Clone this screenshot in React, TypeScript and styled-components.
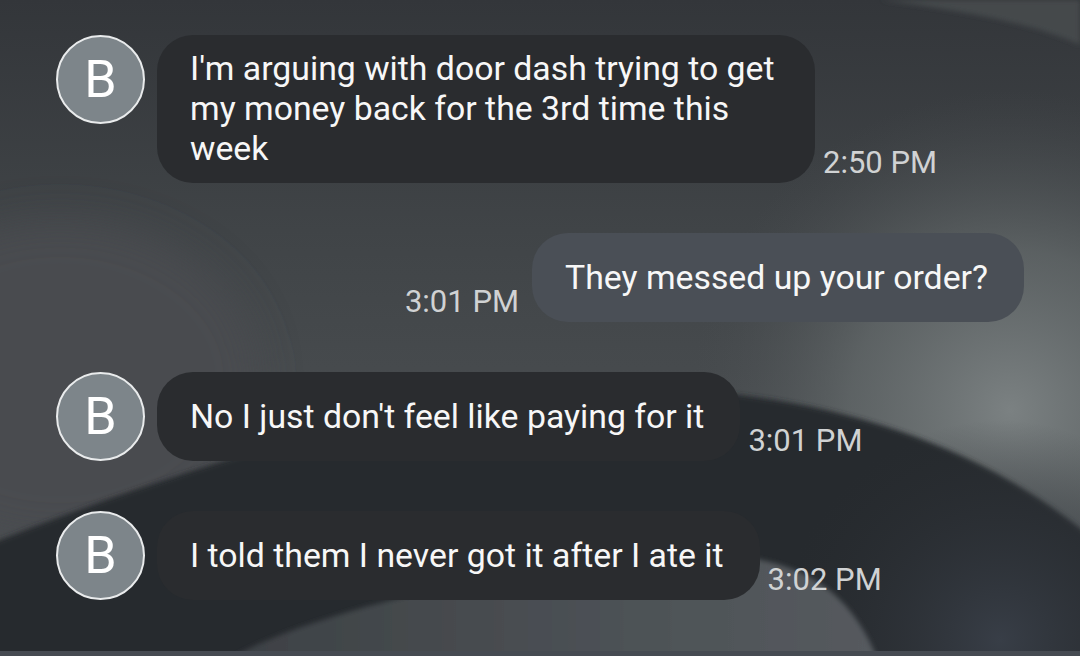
import React from "react";
import styled, { createGlobalStyle } from "styled-components";

const GlobalStyle = createGlobalStyle`
  html, body { margin: 0; padding: 0; background: #3a3d40; }
  body { font-family: Roboto, "Noto Sans", "Liberation Sans", sans-serif; }
  * { box-sizing: border-box; }
`;

const Page = styled.div`
  position: relative;
  width: 1080px;
  height: 656px;
  overflow: hidden;
  background: #3c3f42;
`;

const WallpaperSvg = styled.svg`
  position: absolute;
  inset: 0;
  width: 1080px;
  height: 656px;
  z-index: 0;
`;

const Thread = styled.div`
  position: relative;
  z-index: 1;
  display: flex;
  flex-direction: column;
  gap: 50px;
  padding: 35px 56px;
`;

const Row = styled.div<{ $out?: boolean }>`
  display: flex;
  align-items: flex-start;
  justify-content: ${(p) => (p.$out ? "flex-end" : "flex-start")};
`;

const Avatar = styled.div`
  flex: 0 0 89px;
  width: 89px;
  height: 89px;
  border-radius: 50%;
  background: #7d858a;
  border: 2px solid #e9ebec;
  display: flex;
  align-items: center;
  justify-content: center;
  color: #ffffff;
  font-size: 52px;
  line-height: 1;
  margin-right: 12px;
`;

const Bubble = styled.div<{ $out?: boolean }>`
  min-height: 89px;
  max-width: 658px;
  display: flex;
  align-items: center;
  padding: 14px 36px 14px 33px;
  border-radius: 36px;
  background: ${(p) => (p.$out ? "#4a4f56" : "#2a2c2f")};
  color: #f7f7f7;
  font-size: 33.8px;
  line-height: 40px;
`;

const Time = styled.div<{ $out?: boolean }>`
  align-self: flex-end;
  margin: 0 ${(p) => (p.$out ? "13px" : "0")} 3px ${(p) => (p.$out ? "0" : "8px")};
  color: #d0d2d3;
  font-size: 31px;
  line-height: 35px;
  white-space: nowrap;
`;

const Wallpaper = () => (
  <WallpaperSvg viewBox="0 0 1080 656" aria-hidden="true">
    <defs>
      <linearGradient id="base" x1="0" y1="0" x2="0" y2="1">
        <stop offset="0" stopColor="#33363a" />
        <stop offset="0.35" stopColor="#404447" />
        <stop offset="0.7" stopColor="#4a4e51" />
        <stop offset="1" stopColor="#4a4e51" />
      </linearGradient>
      <radialGradient id="glow" cx="1010" cy="410" r="320" gradientUnits="userSpaceOnUse">
        <stop offset="0" stopColor="#7b8182" stopOpacity="1" />
        <stop offset="0.5" stopColor="#666c6d" stopOpacity="0.7" />
        <stop offset="1" stopColor="#4a4e51" stopOpacity="0" />
      </radialGradient>
      <linearGradient id="blob" x1="0" y1="0" x2="1" y2="0">
        <stop offset="0" stopColor="#3d4145" />
        <stop offset="0.7" stopColor="#4f5458" />
        <stop offset="1" stopColor="#555a5e" />
      </linearGradient>
      <radialGradient id="blue" cx="1000" cy="640" r="220" gradientUnits="userSpaceOnUse">
        <stop offset="0" stopColor="#383e47" />
        <stop offset="1" stopColor="#2a2d31" stopOpacity="0" />
      </radialGradient>
      <filter id="soft" x="-10%" y="-10%" width="120%" height="120%">
        <feGaussianBlur stdDeviation="2.5" />
      </filter>
      <filter id="softer" x="-20%" y="-20%" width="140%" height="140%">
        <feGaussianBlur stdDeviation="20" />
      </filter>
    </defs>
    <rect x="0" y="0" width="1080" height="656" fill="url(#base)" />
    <path d="M880,0 C960,10 1040,25 1080,45 L1080,0 Z" fill="#44484b" filter="url(#soft)" />
    <ellipse cx="60" cy="380" rx="200" ry="160" fill="#484c4f" filter="url(#softer)" />
    <rect x="0" y="0" width="1080" height="656" fill="url(#glow)" />
    <path
      d="M-20,548 C150,480 420,385 640,388 C820,392 980,440 1100,545 L1100,680 L-20,680 Z"
      fill="#27292d"
      filter="url(#soft)"
    />
    <rect x="0" y="0" width="1080" height="656" fill="url(#blue)" />
    <path
      d="M228,660 C320,605 560,556 705,555 C800,555 850,590 878,660 Z"
      fill="url(#blob)"
      filter="url(#soft)"
    />
    <rect x="0" y="651" width="1080" height="5" fill="#464b52" />
  </WallpaperSvg>
);

type Msg = { text: string; time: string; out?: boolean };

const messages: Msg[] = [
  { text: "I'm arguing with door dash trying to get my money back for the 3rd time this week", time: "2:50 PM" },
  { text: "They messed up your order?", time: "3:01 PM", out: true },
  { text: "No I just don't feel like paying for it", time: "3:01 PM" },
  { text: "I told them I never got it after I ate it", time: "3:02 PM" },
];

export default function App() {
  return (
    <>
      <GlobalStyle />
      <Page>
        <Wallpaper />
        <Thread>
          {messages.map((m, i) =>
            m.out ? (
              <Row key={i} $out>
                <Time $out>{m.time}</Time>
                <Bubble $out>{m.text}</Bubble>
              </Row>
            ) : (
              <Row key={i}>
                <Avatar>B</Avatar>
                <Bubble>{m.text}</Bubble>
                <Time>{m.time}</Time>
              </Row>
            )
          )}
        </Thread>
      </Page>
    </>
  );
}
